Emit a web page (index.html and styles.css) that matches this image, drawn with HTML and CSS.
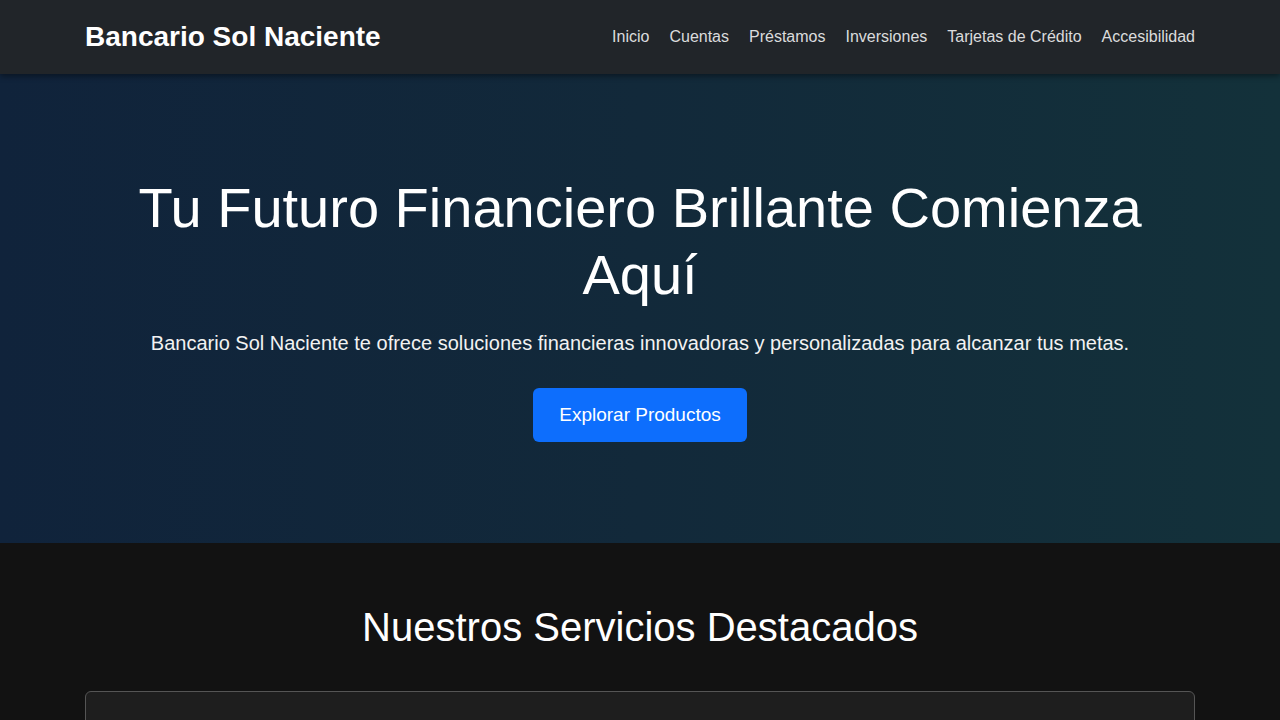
FILE: index.html
```html
<!DOCTYPE html>
<html lang="es">
<head>
<meta charset="utf-8">
<title>Bancario Sol Naciente</title>
<link rel="stylesheet" href="styles.css">
</head>
<body>
<header class="navbar">
  <div class="container nav-inner">
    <a class="brand" href="#">Bancario Sol Naciente</a>
    <nav class="nav-links">
      <a href="#">Inicio</a>
      <a href="#">Cuentas</a>
      <a href="#">Préstamos</a>
      <a href="#">Inversiones</a>
      <a href="#">Tarjetas de Crédito</a>
      <a href="#">Accesibilidad</a>
    </nav>
  </div>
</header>
<section class="hero">
  <div class="container hero-inner">
    <h1 class="hero-title">Tu Futuro Financiero Brillante Comienza Aquí</h1>
    <p class="hero-lead">Bancario Sol Naciente te ofrece soluciones financieras innovadoras y personalizadas para alcanzar tus metas.</p>
    <a class="btn-primary" href="#">Explorar Productos</a>
  </div>
</section>
<section class="services">
  <div class="container">
    <h2 class="services-title">Nuestros Servicios Destacados</h2>
    <div class="card"></div>
  </div>
</section>
</body>
</html>
```

FILE: styles.css
```css
* { box-sizing: border-box; }
html, body { margin: 0; padding: 0; }
body {
  font-family: "Liberation Sans", Arial, sans-serif;
  background: #121212;
  color: #fff;
  font-size: 16px;
  line-height: 1.5;
}
a { text-decoration: none; }
.container {
  max-width: 1140px;
  margin: 0 auto;
  padding: 0 15px;
}
.navbar {
  position: relative;
  z-index: 2;
  background: #212529;
  height: 74px;
  box-shadow: 0 2px 6px rgba(0, 0, 0, 0.45);
}
.nav-inner {
  height: 100%;
  display: flex;
  align-items: center;
  justify-content: space-between;
}
.brand {
  color: #fff;
  font-size: 28px;
  font-weight: bold;
  line-height: 1.2;
}
.nav-links {
  display: flex;
  gap: 20px;
}
.nav-links a {
  color: rgba(255, 255, 255, 0.85);
  font-size: 16px;
}
.hero {
  background: linear-gradient(90deg, #10233b 0%, #12293a 50%, #13313a 100%);
  padding: 100px 0 101px;
  text-align: center;
}
.hero-title {
  margin: 0 0 20px;
  font-size: 56px;
  font-weight: normal;
  line-height: 1.2;
  padding: 0 40px;
}
.hero-lead {
  margin: 0 0 30px;
  font-size: 20px;
  line-height: 1.5;
  color: #f2f2f2;
}
.btn-primary {
  display: inline-block;
  background: #0d6efd;
  color: #fff;
  font-size: 19px;
  line-height: 30px;
  padding: 12px 26px;
  border-radius: 6px;
}
.services {
  padding: 60px 0 0;
  text-align: center;
}
.services-title {
  margin: 0 0 40px;
  font-size: 40px;
  font-weight: normal;
  line-height: 1.2;
}
.card {
  background: #1e1e1e;
  border: 1px solid #555;
  border-radius: 6px;
  height: 200px;
}
```
